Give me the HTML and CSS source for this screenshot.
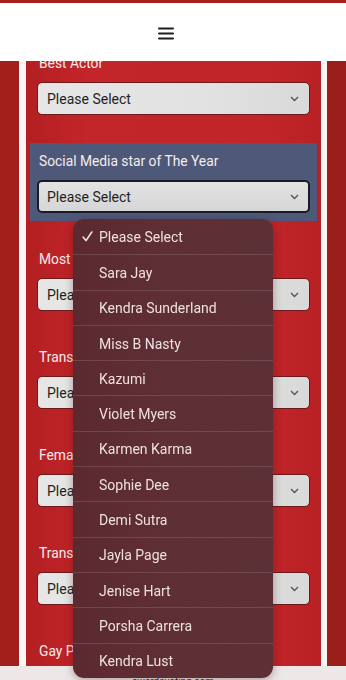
FILE: index.html
```html
<!DOCTYPE html>
<html lang="en">
<head>
<meta charset="utf-8">
<title>Awards Voting</title>
<link rel="stylesheet" href="styles.css">
</head>
<body>
<header class="topbar">
  <svg class="burger" width="16" height="13" viewBox="0 0 16 13"><path d="M1 1.5h14M1 6.5h14M1 11.5h14" stroke="#1e1e1e" stroke-width="2" stroke-linecap="round"/></svg>
</header>
<div class="page">
  <main class="card">
    <div class="group">
      <label class="label">Best Actor</label>
      <div class="select"><span>Please Select</span><svg class="chev" width="9" height="6" viewBox="0 0 9 6"><path d="M1 1l3.5 3.5L8 1" fill="none" stroke="#555" stroke-width="1.4"/></svg></div>
    </div>
    <div class="group active">
      <label class="label">Social Media star of The Year</label>
      <div class="select focus"><span>Please Select</span><svg class="chev" width="9" height="6" viewBox="0 0 9 6"><path d="M1 1l3.5 3.5L8 1" fill="none" stroke="#555" stroke-width="1.4"/></svg></div>
    </div>
    <div class="group">
      <label class="label">Most Popular Star</label>
      <div class="select"><span>Please Select</span><svg class="chev" width="9" height="6" viewBox="0 0 9 6"><path d="M1 1l3.5 3.5L8 1" fill="none" stroke="#555" stroke-width="1.4"/></svg></div>
    </div>
    <div class="group">
      <label class="label">Trans Performer</label>
      <div class="select"><span>Please Select</span><svg class="chev" width="9" height="6" viewBox="0 0 9 6"><path d="M1 1l3.5 3.5L8 1" fill="none" stroke="#555" stroke-width="1.4"/></svg></div>
    </div>
    <div class="group">
      <label class="label">Female Performer</label>
      <div class="select"><span>Please Select</span><svg class="chev" width="9" height="6" viewBox="0 0 9 6"><path d="M1 1l3.5 3.5L8 1" fill="none" stroke="#555" stroke-width="1.4"/></svg></div>
    </div>
    <div class="group">
      <label class="label">Trans Newcomer Performer</label>
      <div class="select"><span>Please Select</span><svg class="chev" width="9" height="6" viewBox="0 0 9 6"><path d="M1 1l3.5 3.5L8 1" fill="none" stroke="#555" stroke-width="1.4"/></svg></div>
    </div>
    <div class="group">
      <label class="label">Gay Performer</label>
      <div class="select"><span>Please Select</span><svg class="chev" width="9" height="6" viewBox="0 0 9 6"><path d="M1 1l3.5 3.5L8 1" fill="none" stroke="#555" stroke-width="1.4"/></svg></div>
    </div>
  </main>
</div>
<footer class="bottombar"><span class="foot-text">awardsvoting.com</span></footer>
<ul class="menu">
  <li class="opt checked"><svg class="check" width="11" height="11" viewBox="0 0 11 11"><path d="M1.2 6.2L4 9.6L9.8 1" fill="none" stroke="#f1e3e3" stroke-width="1.6" stroke-linecap="round" stroke-linejoin="round"/></svg>Please Select</li>
  <li class="opt">Sara Jay</li>
  <li class="opt">Kendra Sunderland</li>
  <li class="opt">Miss B Nasty</li>
  <li class="opt">Kazumi</li>
  <li class="opt">Violet Myers</li>
  <li class="opt">Karmen Karma</li>
  <li class="opt">Sophie Dee</li>
  <li class="opt">Demi Sutra</li>
  <li class="opt">Jayla Page</li>
  <li class="opt">Jenise Hart</li>
  <li class="opt">Porsha Carrera</li>
  <li class="opt">Kendra Lust</li>
</ul>
</body>
</html>
```
FILE: styles.css
```css
html, body {
  margin: 0;
  padding: 0;
  height: 100%;
  overflow: hidden;
}
body {
  font-family: Roboto, "Noto Sans", "Liberation Sans", sans-serif;
  background: #9f1f1b;
  position: relative;
}
.topbar {
  position: fixed;
  top: 0;
  left: 0;
  right: 0;
  height: 58px;
  border-top: 3px solid #a8201c;
  background: #ffffff;
  display: flex;
  align-items: center;
  justify-content: center;
  z-index: 5;
}
.burger {
  display: block;
  margin-left: -14px;
  margin-top: 2px;
}
.page {
  padding: 0 19px 0 19px;
  height: 100%;
  background: linear-gradient(90deg, #a31f1b 0%, #9c1e1a 100%);
}
.card {
  height: 100%;
  box-sizing: border-box;
  border-left: 7px solid #fbf6f6;
  border-right: 6px solid #fbf6f6;
  background: linear-gradient(90deg, #b31f22 0%, #c2252a 20%, #c1252a 80%, #b82124 100%);
  padding: 45px 4px 0 4px;
  display: flex;
  flex-direction: column;
  gap: 20px;
}
.group {
  padding: 8px 7px;
  display: flex;
  flex-direction: column;
}
.group.active {
  background: #4e5979;
}
.label {
  display: block;
  color: #f6ecec;
  font-size: 13.8px;
  line-height: 18px;
  padding-left: 2px;
  margin-bottom: 11px;
  margin-top: 1px;
  margin-bottom: 10px;
  white-space: nowrap;
}
.select {
  height: 33px;
  box-sizing: border-box;
  border: 1px solid #6e1a1b;
  border-radius: 5px;
  background: linear-gradient(90deg, #e6e6e6 0%, #e2e2e2 60%, #d9d9d9 100%);
  display: flex;
  align-items: center;
  justify-content: space-between;
  padding: 1px 9px 0 9px;
  color: #1f1f1f;
  font-size: 14px;
}
.select.focus {
  border: 2px solid #181b28;
  background: linear-gradient(180deg, #e2e2e2 0%, #d6d6d6 100%);
  padding: 1px 8px 0 8px;
}
.chev {
  display: block;
  margin-right: 1px;
}
.bottombar {
  position: fixed;
  left: 0;
  right: 0;
  bottom: 0;
  height: 14px;
  background: #ede8e8;
  z-index: 6;
  display: flex;
  justify-content: center;
  overflow: hidden;
}
.foot-text {
  font-size: 10px;
  line-height: 10px;
  margin-top: 11px;
  color: #333;
}
.menu {
  position: absolute;
  left: 73px;
  top: 219px;
  width: 200px;
  margin: 0;
  padding: 0;
  list-style: none;
  background: linear-gradient(90deg, #5b2a30 0%, #5e2f35 50%, #5c3036 100%);
  border-radius: 11px;
  overflow: hidden;
  z-index: 10;
  box-shadow: 0 2px 10px rgba(60, 10, 10, 0.35);
}
.opt {
  height: 35.3px;
  box-sizing: border-box;
  display: flex;
  align-items: center;
  padding-left: 26px;
  padding-top: 1px;
  color: #efe0e0;
  font-size: 14px;
  border-top: 1px solid rgba(255, 255, 255, 0.13);
  position: relative;
}
.opt.checked {
  border-top: none;
}
.check {
  position: absolute;
  left: 9px;
  top: 12px;
  display: block;
}
```
